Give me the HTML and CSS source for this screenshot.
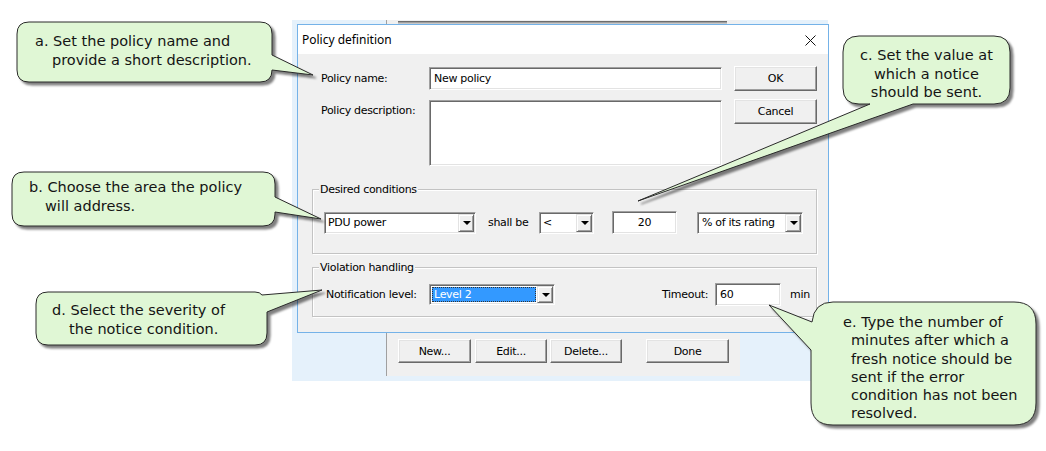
FILE: index.html
```html
<!DOCTYPE html>
<html>
<head>
<meta charset="utf-8">
<title>Policy definition</title>
<link rel="stylesheet" href="styles.css">
</head>
<body>
<div class="canvas">
  <div class="bgwin">
    <div class="pane">
      <div class="listtop"></div>
      <div class="pane-buttons">
        <div class="btn b-new">New...</div>
        <div class="btn b-edit">Edit...</div>
        <div class="btn b-del">Delete...</div>
        <div class="btn b-done">Done</div>
      </div>
    </div>
  </div>

  <div class="dialog">
    <div class="titlebar">
      <span class="title">Policy definition</span>
      <svg class="close" width="11" height="11" viewBox="0 0 11 11"><path d="M0.5 0.5 L10.5 10.5 M10.5 0.5 L0.5 10.5" stroke="#111" stroke-width="1" fill="none"/></svg>
    </div>
    <div class="body">
      <div class="topgrid">
        <div class="lbl">Policy name:</div>
        <div class="field f-name">New policy</div>
        <div class="btn b-ok">OK</div>
        <div class="lbl lbl-top">Policy description:</div>
        <div class="field f-desc"></div>
        <div class="btn b-cancel">Cancel</div>
      </div>

      <div class="group g1">
        <div class="gtitle">Desired conditions</div>
        <div class="grow">
          <div class="combo c-pdu"><span class="ctext">PDU power</span><span class="cbtn"></span></div>
          <span class="shall">shall be</span>
          <div class="combo c-lt"><span class="ctext">&lt;</span><span class="cbtn"></span></div>
          <div class="field f-num">20</div>
          <div class="combo c-pct"><span class="ctext">% of its rating</span><span class="cbtn"></span></div>
        </div>
      </div>

      <div class="group g2">
        <div class="gtitle">Violation handling</div>
        <div class="grow">
          <span class="nlabel">Notification level:</span>
          <div class="combo c-level"><span class="ctext sel">Level 2</span><span class="cbtn"></span></div>
          <span class="tlabel">Timeout:</span>
          <div class="field f-time">60</div>
          <span class="min">min</span>
        </div>
      </div>
    </div>
  </div>

  <svg class="callouts" width="1046" height="451" viewBox="0 0 1046 451">
    <path class="co" d="M29,22 H260 Q272,22 272,34 V55 L313,75 L272,70 Q272,82 260,82 H29 Q17,82 17,70 V34 Q17,22 29,22 Z"/>
    <path class="co" d="M24,172 H263 Q275,172 275,184 V197 L321,219 L275,212 V214 Q275,226 263,226 H24 Q12,226 12,214 V184 Q12,172 24,172 Z"/>
    <path class="co" d="M859,36 H994 Q1010,36 1010,52 V88 Q1010,104 994,104 H913 L638,201 L870,104 H859 Q843,104 843,88 V52 Q843,36 859,36 Z"/>
    <path class="co" d="M48,292 H255 Q260,292 262,295 L322,290 L267,312 V333 Q267,345 255,345 H48 Q36,345 36,333 V304 Q36,292 48,292 Z"/>
    <path class="co" d="M833,302 H1014 Q1036,302 1036,324 V403 Q1036,425 1014,425 H833 Q811,425 811,403 V350 L769,305 L812,322 Q814,302 833,302 Z"/>
  </svg>

  <div class="note na">a. Set the policy name and<br>provide a short description.</div>
  <div class="note nb">b. Choose the area the policy<br>will address.</div>
  <div class="note nc">c. Set the value at<br>which a notice<br>should be sent.</div>
  <div class="note nd">d. Select the severity of<br>the notice condition.</div>
  <div class="note ne">e. Type the number of<br>minutes after which a<br>fresh notice should be<br>sent if the error<br>condition has not been<br>resolved.</div>
</div>
</body>
</html>
```

FILE: styles.css
```css
* { box-sizing: border-box; margin: 0; padding: 0; }
body { margin: 0; background: #fff; font-family: "DejaVu Sans", Verdana, sans-serif; }

.canvas { position: relative; width: 1046px; height: 451px; overflow: hidden; background: #fff; }

/* background window */
.bgwin {
  position: absolute; left: 292px; top: 20px; width: 536px; height: 361px;
  background: #e5f1fb; display: flex; padding-left: 94px;
}
.pane {
  width: 354px; height: 356px; border-left: 1px solid #a0a0a0; background: #f0f0f0;
  display: flex; flex-direction: column;
}
.listtop {
  flex: 1; margin: 1px 13px 8px 11px; border-top: 1px solid #6d6d6d; background: #fff;
  box-shadow: inset 0 1px 0 #a0a0a0, inset 0 2px 0 #c8c8c8;
}
.pane-buttons { display: flex; padding: 0 0 13px 11px; font: 11px/13px "DejaVu Sans", sans-serif; letter-spacing: -0.3px; }
.pane-buttons .btn { height: 24px; }
.b-new { width: 73px; margin-right: 4px; }
.b-edit { width: 72px; margin-right: 3px; }
.b-del { width: 72px; margin-right: 24px; }
.b-done { width: 83px; }

/* dialog */
.dialog {
  position: absolute; left: 297px; top: 24px; width: 532px;
  border: 1px solid #74b2e8; background: #f0f0f0;
  font: 11px/13px "DejaVu Sans", sans-serif; letter-spacing: -0.3px; color: #000;
}
.titlebar {
  height: 29px; background: #fff; display: flex; align-items: center;
  justify-content: space-between; padding: 0 12px 0 4px;
}
.title { font: 12px/16px "Noto Sans", sans-serif; letter-spacing: 0; color: #000; }
.close { display: block; margin-top: 1px; }

.body { padding: 12px 11px 15px 14px; }

.topgrid {
  display: grid; margin-left: 9px;
  grid-template-columns: 96px 293px 83px; grid-template-rows: 25px 67px;
  column-gap: 12px; row-gap: 8px;
}
.lbl { align-self: center; white-space: nowrap; }
.lbl-top { align-self: start; margin-top: 5px; }

.field {
  background: #fff; border: 1px solid; border-color: #a0a0a0 #fff #fff #a0a0a0;
  box-shadow: inset 1px 1px 0 #696969, inset -1px -1px 0 #e3e3e3;
  padding: 0 4px; display: flex; align-items: center; white-space: nowrap;
}
.f-name { height: 23px; align-self: center; }
.f-desc { height: 66px; margin-top: 1px; }

.btn {
  background: #f0f0f0; border: 1px solid; border-color: #fff #696969 #696969 #fff;
  box-shadow: inset -1px -1px 0 #a0a0a0, inset 1px 1px 0 #e3e3e3;
  display: flex; align-items: center; justify-content: center; color: #000; white-space: nowrap;
}
.b-ok, .b-cancel { height: 25px; align-self: start; }

/* group boxes */
.group {
  border: 1px solid #c3c3c3; box-shadow: inset 1px 1px 0 #fff, 1px 1px 0 #fff;
}
.g1 { margin-top: 23px; padding-bottom: 19px; }
.g2 { margin-top: 13px; padding-bottom: 10px; }
.gtitle {
  width: fit-content; margin: -7px 0 0 6px; padding: 0 1px; background: #f0f0f0;
  line-height: 13px; white-space: nowrap;
}
.grow { display: flex; align-items: center; height: 23px; }
.g1 .grow { margin-top: 15px; padding-left: 11px; }
.g2 .grow { margin-top: 9px; padding-left: 13px; }

.combo {
  background: #fff; border: 1px solid; border-color: #a0a0a0 #fff #fff #a0a0a0;
  box-shadow: inset 1px 1px 0 #696969, inset -1px -1px 0 #e3e3e3;
  padding: 1px; display: flex; align-items: stretch; height: 22px;
}
.ctext { flex: 1; padding-left: 2px; display: flex; align-items: center; white-space: nowrap; overflow: hidden; }
.cbtn {
  width: 16px; background: #f0f0f0; border: 1px solid; border-color: #e3e3e3 #696969 #696969 #e3e3e3;
  box-shadow: inset 1px 1px 0 #fff, inset -1px -1px 0 #a0a0a0;
  display: flex; align-items: center; justify-content: center;
}
.cbtn::after {
  content: ""; width: 0; height: 0; border-top: 4px solid #000;
  border-left: 4px solid transparent; border-right: 4px solid transparent; margin-left: 1px;
}

.c-pdu { width: 152px; margin-right: 12px; }
.shall { width: 39px; margin-right: 12px; white-space: nowrap; }
.c-lt { width: 55px; margin-right: 18px; }
.f-num { width: 65px; height: 23px; justify-content: center; margin-right: 20px; }
.c-pct { width: 106px; }
.c-pct .ctext { padding-left: 3px; }

.nlabel { width: 103px; white-space: nowrap; }
.c-level { width: 126px; height: 21px; }
.ctext.sel {
  margin: 1px; padding-left: 1px; background: #3399ff; color: #fff;
  border: 1px dotted #333;
}
.tlabel { margin-left: auto; width: 53px; white-space: nowrap; }
.f-time { width: 66px; height: 23px; }
.min { width: 35px; padding-left: 9px; white-space: nowrap; }

/* callouts */
.callouts { position: absolute; left: 0; top: 0; pointer-events: none; }
.co {
  fill: #e0f7d5; stroke: #2a2a2a; stroke-width: 1;
  filter: drop-shadow(3px 3px 1.2px rgba(0, 0, 0, 0.5));
}
.note {
  position: absolute; font: 14.5px/18.5px "DejaVu Sans", Verdana, sans-serif;
  color: #141414; white-space: nowrap;
}
.na { left: 17px; top: 22px; width: 255px; padding: 10px 0 0 35px; text-indent: -17px; }
.nb { left: 12px; top: 172px; width: 263px; padding: 6px 0 0 33px; text-indent: -16px; }
.nc { left: 843px; top: 36px; width: 167px; padding-top: 10px; text-align: center; }
.nd { left: 36px; top: 292px; width: 231px; padding: 9px 0 0 33px; text-indent: -17px; }
.ne { left: 811px; top: 302px; width: 225px; padding: 11px 0 0 40px; text-indent: -8px; line-height: 18.25px; }
```
